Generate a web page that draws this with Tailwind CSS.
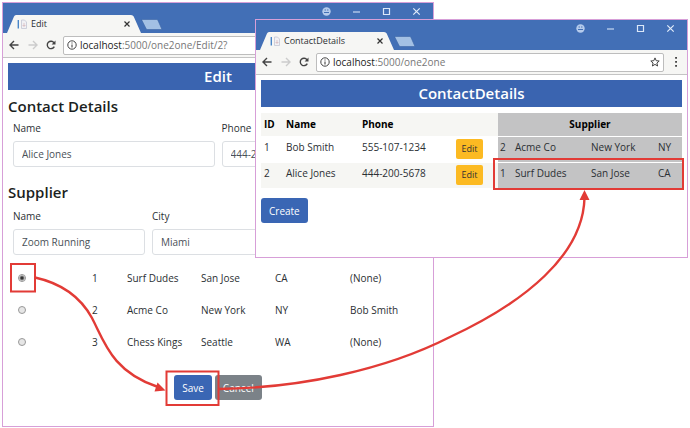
<!DOCTYPE html>
<html lang="en">
<head>
<meta charset="utf-8">
<title>One to one contact editing</title>
<script src="https://cdn.jsdelivr.net/npm/@tailwindcss/browser@4"></script>
</head>
<body class="relative min-h-screen overflow-hidden bg-white font-['Open_Sans','Noto_Sans',sans-serif] text-[10px] leading-4 text-[#2b2f33]">

<svg class="hidden" aria-hidden="true">
  <symbol id="tab" viewBox="0 0 134 18"><path d="M0 18 L7 1.5 Q7.6 0 9 0 H124 Q126 0 126.700 1.500 L134 18 Z" fill="#f6f6f4"/></symbol>
  <symbol id="newtab" viewBox="0 0 22 11"><path d="M1.500 .5 H15.500 Q16.500 .5 17 1.500 L20.500 9.500 Q21 10.500 20 10.500 H6.500 Q5.500 10.500 5 9.500 L1 1.500 Q.7 .5 1.500 .5Z" fill="#a3c0e4" stroke="#3c64a4" stroke-width=".6"/></symbol>
  <symbol id="page" viewBox="0 0 11 11"><path d="M1.300 1v8.500" stroke="#4a86c8" stroke-width="1.400"/><path d="M4.500 1h3l2 2v6.500h-5z" fill="#f1f1f4" stroke="#c4c7d4" stroke-width=".8"/><path d="M5.500 6.500h3M7 4v4" stroke="#d9bcc0" stroke-width=".8"/></symbol>
  <symbol id="close" viewBox="0 0 8 8"><path d="M1.500 1.500l5 5M6.500 1.500l-5 5" stroke="#333" stroke-width="1.200"/></symbol>
  <symbol id="back" viewBox="0 0 10 10"><path d="M9.500 5H1.200M5 1L1 5l4 4" fill="none" stroke="currentColor" stroke-width="1.400"/></symbol>
  <symbol id="reload" viewBox="0 0 10 10"><path d="M8.300 6.600A3.700 3.700 0 1 1 8 2.800" fill="none" stroke="#444" stroke-width="1.400"/><path d="M9.500 .4v4H5.600z" fill="#444"/></symbol>
  <symbol id="info" viewBox="0 0 10 10"><circle cx="5" cy="5" r="4.200" fill="none" stroke="#444" stroke-width="1"/><path d="M5 4.400v3M5 2.400v1.100" stroke="#444" stroke-width="1.100"/></symbol>
  <symbol id="star" viewBox="0 0 10 10"><path d="M5 .9l1.200 2.800 3 .3-2.300 2 .7 3L5 7.400 2.400 9l.7-3L.8 4l3-.3z" fill="none" stroke="#444" stroke-width="1"/></symbol>
  <symbol id="dots" viewBox="0 0 4 10"><path d="M1.200 0h1.700v1.700H1.200zM1.200 4h1.700v1.700H1.200zM1.200 8h1.700v1.700H1.200z" fill="#333"/></symbol>
  <symbol id="user" viewBox="0 0 9 9"><circle cx="4.500" cy="4.500" r="4.200" fill="#b5cbec"/><path d="M2.600 3h1.300M5.100 3h1.300M2 5.500h5" stroke="#426fb6" stroke-width="1.200"/></symbol>
  <symbol id="min" viewBox="0 0 9 9"><path d="M1 5h7" stroke="#c7d9f2" stroke-width="1.200"/></symbol>
  <symbol id="max" viewBox="0 0 9 9"><path d="M1.500 1.500h6v6h-6z" fill="none" stroke="#dbe7f8" stroke-width="1.200"/></symbol>
  <symbol id="exit" viewBox="0 0 9 9"><path d="M1.300 1.300l6.400 6.400M7.700 1.300L1.300 7.700" stroke="#e2ecfa" stroke-width="1.200"/></symbol>
</svg>

<!-- Edit window -->
<section class="absolute top-[2px] left-[2px] flex h-[425px] w-[432px] flex-col border border-[#d79fd8] bg-white" aria-label="Edit window">
  <header class="flex h-[30px] shrink-0 items-start justify-between bg-[#426fb6]">
    <div class="flex self-end pl-1">
      <div class="relative flex h-[18px] w-[134px] items-center pr-[10px] pl-[10px] text-[9px]">
        <svg class="absolute inset-0 size-full" preserveAspectRatio="none"><use href="#tab"/></svg>
        <svg class="relative size-[11px]"><use href="#page"/></svg>
        <span class="relative ml-[3px] flex-1">Edit</span>
        <button class="relative" aria-label="Close tab"><svg class="size-2"><use href="#close"/></svg></button>
      </div>
      <button aria-label="New tab" class="mt-1 h-[11px]"><svg class="h-[11px] w-[22px]"><use href="#newtab"/></svg></button>
    </div>
    <div class="flex gap-[21px] pt-1 pr-[12px]">
      <button aria-label="Profile"><svg class="size-[9px]"><use href="#user"/></svg></button>
      <button aria-label="Minimize"><svg class="size-[9px]"><use href="#min"/></svg></button>
      <button aria-label="Maximize"><svg class="size-[9px]"><use href="#max"/></svg></button>
      <button aria-label="Close"><svg class="size-[9px]"><use href="#exit"/></svg></button>
    </div>
  </header>
  <nav class="flex h-[25px] shrink-0 items-center border-b border-[#c4c4c4] bg-[#f6f6f4] pr-[22px] pl-[6px]">
    <button class="text-[#444]" aria-label="Back"><svg class="size-[10px]"><use href="#back"/></svg></button>
    <button class="ml-[9px] rotate-180 text-[#ccc]" aria-label="Forward"><svg class="size-[10px]"><use href="#back"/></svg></button>
    <button class="ml-2" aria-label="Reload"><svg class="size-[10px]"><use href="#reload"/></svg></button>
    <div class="ml-[7px] flex h-[19px] flex-1 items-center rounded-[2px] border border-[#bdbdbd] bg-white px-[3px]">
      <svg class="size-[10px]"><use href="#info"/></svg>
      <div class="ml-[3px] flex-1 text-[#777]" role="textbox" contenteditable="true" aria-label="Address"><span class="text-[#222]">localhost</span>:5000/one2one/Edit/2?</div>
    </div>
  </nav>
  <form class="flex flex-1 flex-col px-[5px] pt-[5px]">
    <h1 class="bg-[#3a64b0] text-center text-[15px] leading-[27px] font-semibold text-white">Edit</h1>
    <h2 class="mt-[6px] text-[15px] leading-5 font-semibold text-[#1c1f22]">Contact Details</h2>
    <div class="mt-1 grid grid-cols-2 gap-[7px] px-[5px]">
      <div>
        <label for="cname" class="block">Name</label>
        <input id="cname" value="Alice Jones" class="mt-[5px] block h-[26px] w-full rounded-[3px] border border-[#dcdfe3] px-2 text-[#495057]">
      </div>
      <div>
        <label for="cphone" class="block">Phone</label>
        <input id="cphone" value="444-200-5678" class="mt-[5px] block h-[26px] w-full rounded-[3px] border border-[#dcdfe3] px-2 text-[#495057]">
      </div>
    </div>
    <h2 class="mt-[15px] text-[15px] leading-5 font-semibold text-[#1c1f22]">Supplier</h2>
    <div class="mt-[6px] grid grid-cols-3 items-end gap-[7px] px-[5px]">
      <div>
        <label for="sname" class="block">Name</label>
        <input id="sname" value="Zoom Running" class="mt-[5px] block h-[26px] w-full rounded-[3px] border border-[#dcdfe3] px-2 text-[#495057]">
      </div>
      <div>
        <label for="scity" class="block">City</label>
        <input id="scity" value="Miami" class="mt-[5px] block h-[26px] w-full rounded-[3px] border border-[#dcdfe3] px-2 text-[#495057]">
      </div>
      <input aria-label="State" class="block h-[26px] w-full rounded-[3px] border border-[#dcdfe3] px-2 text-[#495057]">
    </div>
    <table class="mt-[7px] w-full table-fixed">
      <colgroup><col class="w-[84px]"><col class="w-[35px]"><col class="w-[74px]"><col class="w-[74px]"><col class="w-[75px]"><col></colgroup>
      <tbody>
        <tr class="h-8">
          <td class="pl-[10px]"><input type="radio" name="supplier" aria-label="Surf Dudes" checked class="block size-2 appearance-none rounded-full border border-[#999] bg-[radial-gradient(#333_0_1px,#e6e6e6_3px)]"></td>
          <td>1</td><td>Surf Dudes</td><td>San Jose</td><td>CA</td><td>(None)</td>
        </tr>
        <tr class="h-8">
          <td class="pl-[10px]"><input type="radio" name="supplier" aria-label="Acme Co" class="block size-2 appearance-none rounded-full border border-[#999] bg-[#e6e6e6]"></td>
          <td>2</td><td>Acme Co</td><td>New York</td><td>NY</td><td>Bob Smith</td>
        </tr>
        <tr class="h-8">
          <td class="pl-[10px]"><input type="radio" name="supplier" aria-label="Chess Kings" class="block size-2 appearance-none rounded-full border border-[#999] bg-[#e6e6e6]"></td>
          <td>3</td><td>Chess Kings</td><td>Seattle</td><td>WA</td><td>(None)</td>
        </tr>
      </tbody>
    </table>
    <div class="mt-[17px] flex justify-center gap-[3px]">
      <button type="button" class="h-[25px] rounded-[3px] bg-[#3a66b4] px-2 text-white">Save</button>
      <button type="button" class="h-[25px] rounded-[3px] bg-[#7b8288] px-2 text-white">Cancel</button>
    </div>
  </form>
</section>

<!-- Contact list window -->
<section class="absolute top-[19px] left-[255px] flex h-[239px] w-[433px] flex-col border border-[#d79fd8] bg-white" aria-label="ContactDetails window">
  <header class="flex h-[30px] shrink-0 items-start justify-between bg-[#426fb6]">
    <div class="flex self-end pl-1">
      <div class="relative flex h-[18px] w-[134px] items-center pr-[10px] pl-[10px] text-[9px]">
        <svg class="absolute inset-0 size-full" preserveAspectRatio="none"><use href="#tab"/></svg>
        <svg class="relative size-[11px]"><use href="#page"/></svg>
        <span class="relative ml-[3px] flex-1">ContactDetails</span>
        <button class="relative" aria-label="Close tab"><svg class="size-2"><use href="#close"/></svg></button>
      </div>
      <button aria-label="New tab" class="mt-1 h-[11px]"><svg class="h-[11px] w-[22px]"><use href="#newtab"/></svg></button>
    </div>
    <div class="flex gap-[21px] pt-1 pr-[12px]">
      <button aria-label="Profile"><svg class="size-[9px]"><use href="#user"/></svg></button>
      <button aria-label="Minimize"><svg class="size-[9px]"><use href="#min"/></svg></button>
      <button aria-label="Maximize"><svg class="size-[9px]"><use href="#max"/></svg></button>
      <button aria-label="Close"><svg class="size-[9px]"><use href="#exit"/></svg></button>
    </div>
  </header>
  <nav class="flex h-[25px] shrink-0 items-center border-b border-[#c4c4c4] bg-[#f6f6f4] pr-[9px] pl-[6px]">
    <button class="text-[#444]" aria-label="Back"><svg class="size-[10px]"><use href="#back"/></svg></button>
    <button class="ml-[9px] rotate-180 text-[#ccc]" aria-label="Forward"><svg class="size-[10px]"><use href="#back"/></svg></button>
    <button class="ml-2" aria-label="Reload"><svg class="size-[10px]"><use href="#reload"/></svg></button>
    <div class="ml-[7px] flex h-[19px] flex-1 items-center rounded-[2px] border border-[#bdbdbd] bg-white px-[3px]">
      <svg class="size-[10px]"><use href="#info"/></svg>
      <div class="ml-[3px] flex-1 text-[#777]" role="textbox" contenteditable="true" aria-label="Address"><span class="text-[#222]">localhost</span>:5000/one2one</div>
      <button aria-label="Bookmark"><svg class="size-[10px]"><use href="#star"/></svg></button>
    </div>
    <button class="ml-[10px]" aria-label="Menu"><svg class="h-[10px] w-1"><use href="#dots"/></svg></button>
  </nav>
  <main class="flex-1 px-[5px] pt-[5px]">
    <h1 class="bg-[#3a64b0] text-center text-[15px] leading-[27px] font-semibold text-white">ContactDetails</h1>
    <table class="mt-[6px] w-full table-fixed text-left">
      <colgroup><col class="w-[22px]"><col class="w-[76px]"><col class="w-[95px]"><col class="w-[44px]"><col class="w-[14px]"><col class="w-[76px]"><col class="w-[67px]"><col></colgroup>
      <thead>
        <tr class="h-[23px] border-b border-white bg-[#f6f6f3] text-black">
          <th class="pl-[3px]">ID</th><th class="pl-[3px]">Name</th><th class="pl-[3px]">Phone</th><th></th>
          <th colspan="4" class="bg-[#c3c3c4] text-center">Supplier</th>
        </tr>
      </thead>
      <tbody>
        <tr class="h-[26px] border-b border-white">
          <td class="pb-1 pl-[3px]">1</td><td class="pb-1 pl-[3px]">Bob Smith</td><td class="pb-1 pl-[3px]">555-107-1234</td>
          <td class="pl-[2px]"><button class="block h-5 w-[27px] rounded-[2px] bg-[#fcba22] text-[9px] text-[#333]">Edit</button></td>
          <td class="bg-[#c3c3c4] pb-1 pl-[2px]">2</td><td class="bg-[#c3c3c4] pb-1 pl-[3px]">Acme Co</td><td class="bg-[#c3c3c4] pb-1 pl-[3px]">New York</td><td class="bg-[#c3c3c4] pb-1 pl-[3px]">NY</td>
        </tr>
        <tr class="h-[26px] bg-[#f6f6f3]">
          <td class="pb-1 pl-[3px]">2</td><td class="pb-1 pl-[3px]">Alice Jones</td><td class="pb-1 pl-[3px]">444-200-5678</td>
          <td class="pl-[2px]"><button class="block h-5 w-[27px] rounded-[2px] bg-[#fcba22] text-[9px] text-[#333]">Edit</button></td>
          <td class="bg-[#c3c3c4] pb-1 pl-[2px]">1</td><td class="bg-[#c3c3c4] pb-1 pl-[3px]">Surf Dudes</td><td class="bg-[#c3c3c4] pb-1 pl-[3px]">San Jose</td><td class="bg-[#c3c3c4] pb-1 pl-[3px]">CA</td>
        </tr>
      </tbody>
    </table>
    <button class="mt-[10px] h-[25px] rounded-[3px] bg-[#3a66b4] px-2 text-white">Create</button>
  </main>
</section>

<!-- Callout boxes and arrows -->
<svg class="pointer-events-none absolute top-0 left-0 h-[428px] w-[690px]" viewBox="0 0 690 428" fill="none" stroke="#e23b36" stroke-width="2" aria-hidden="true">
  <path d="M11 264h24v27.500H11zM166.500 371.500h52v33.500h-52zM494 159h189v30H494z"/>
  <path d="M35 277.500C60 283 80 296 92 318C104 341 112 372 158 387" stroke-width="2.400"/>
  <path d="M219 389C300 388 385 370 450 337C525 302 583 255 584.500 198" stroke-width="2.400"/>
  <path d="M165.500 390.500L157.500 382.500L154.500 391.500zM584.500 190l5 10h-10z" fill="#e23b36" stroke="none"/>
</svg>
</body>
</html>
